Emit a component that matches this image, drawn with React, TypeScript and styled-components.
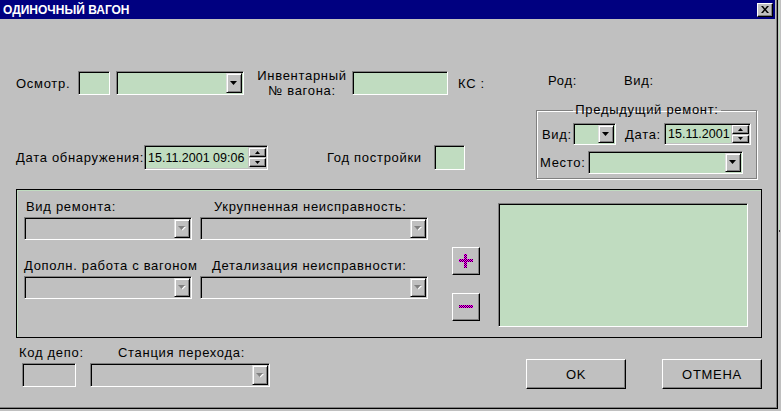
import React from 'react';
import styled, { createGlobalStyle } from 'styled-components';

const GlobalStyle = createGlobalStyle`
  html, body {
    margin: 0;
    padding: 0;
    background: #c0c0c0;
  }
  body {
    font-family: "Liberation Sans", Arial, sans-serif;
    font-size: 13px;
    letter-spacing: 0.7px;
    color: #000;
  }
`;

const Screen = styled.div`
  display: flex;
  width: 781px;
  height: 411px;
  overflow: hidden;
  background: #c0c0c0;
`;

const Window = styled.div`
  box-sizing: border-box;
  width: 778px;
  height: 409px;
  flex: none;
  display: flex;
  flex-direction: column;
  background: #c0c0c0;
  border-right: 1px solid #000;
  border-bottom: 1px solid #000;
  box-shadow: inset -1px -1px 0 #808080;
`;

const BackStrip = styled.div`
  flex: 1;
  display: flex;
  justify-content: flex-end;
`;

const BackLine = styled.div`
  width: 1px;
  height: 230px;
  margin-right: 1px;
  background: #c0dcc0;
  border-bottom: 2px solid #404040;
`;

const TitleBar = styled.div`
  height: 19px;
  margin-right: 2px;
  display: flex;
  align-items: center;
  justify-content: space-between;
  padding-left: 3px;
  background: #000080;
  color: #fff;
  font-weight: bold;
  font-size: 12px;
  letter-spacing: 0;
`;

const CloseButton = styled.div`
  box-sizing: border-box;
  width: 16px;
  height: 14px;
  margin-right: 2px;
  display: flex;
  align-items: center;
  justify-content: center;
  background: #c0c0c0;
  border: 1px solid;
  border-color: #fff #000 #000 #fff;
  box-shadow: inset -1px -1px 0 #808080;
`;

const Top = styled.div`
  display: flex;
  height: 170px;
`;

const LeftCol = styled.div`
  width: 520px;
  padding-left: 16px;
  display: flex;
  flex-direction: column;
`;

const RightCol = styled.div`
  width: 221px;
  display: flex;
  flex-direction: column;
`;

const Row = styled.div<{ $mt: number; $h: number }>`
  display: flex;
  align-items: center;
  margin-top: ${p => p.$mt}px;
  height: ${p => p.$h}px;
`;

const Label = styled.div<{ $w?: number; $ml?: number; $center?: boolean }>`
  flex: none;
  ${p => (p.$w ? `width: ${p.$w}px;` : '')}
  margin-left: ${p => p.$ml ?? 0}px;
  text-align: ${p => (p.$center ? 'center' : 'left')};
  line-height: 15px;
  white-space: nowrap;
`;

const Sunken = styled.div<{ $w: number; $h?: number; $green?: boolean; $ml?: number }>`
  box-sizing: border-box;
  flex: none;
  width: ${p => p.$w}px;
  height: ${p => p.$h ?? 24}px;
  margin-left: ${p => p.$ml ?? 0}px;
  display: flex;
  align-items: stretch;
  justify-content: flex-end;
  padding: 1px;
  border: 1px solid;
  border-color: #808080 #fff #fff #808080;
  box-shadow: inset 1px 1px 0 #000;
  background: ${p => (p.$green ? '#c0dcc0' : '#c0c0c0')};
`;

const ArrowButton = styled.div`
  box-sizing: border-box;
  width: 16px;
  display: flex;
  align-items: center;
  justify-content: center;
  background: #c0c0c0;
  border: 1px solid;
  border-color: #dfdfdf #000 #000 #dfdfdf;
  box-shadow: inset 1px 1px 0 #fff, inset -1px -1px 0 #808080;
`;

const DateText = styled.div`
  flex: 1;
  padding-left: 2px;
  display: flex;
  align-items: center;
  background: #c0dcc0;
  white-space: nowrap;
  letter-spacing: 0;
  font-size: 12.5px;
`;

const SpinBox = styled.div`
  width: 17px;
  margin-left: 1px;
  display: flex;
  flex-direction: column;
  justify-content: center;
  gap: 1px;
  background: #c0c0c0;
`;

const SpinButton = styled.div`
  box-sizing: border-box;
  height: 9px;
  display: flex;
  align-items: center;
  justify-content: center;
  border: 1px solid;
  border-color: #fff #000 #000 #fff;
  box-shadow: inset -1px -1px 0 #808080;
  background: #c0c0c0;
`;

const TypeRow = styled.div`
  display: flex;
  margin-top: 53px;
  height: 16px;
  align-items: center;
  padding-left: 12px;
`;

const GroupBox = styled.fieldset`
  box-sizing: border-box;
  margin: 15px 0 0 0;
  padding: 3px 4px 0 5px;
  width: 221px;
  height: 76px;
  border: 1px solid #808080;
  box-shadow: 1px 1px 0 #fff, inset 1px 1px 0 #fff;
  display: flex;
  flex-direction: column;
`;

const Legend = styled.legend`
  margin: 0 auto;
  padding: 0 2px;
  line-height: 14px;
`;

const BoxRow = styled.div<{ $mt: number; $h: number; $pl?: number }>`
  display: flex;
  align-items: center;
  margin-top: ${p => p.$mt}px;
  height: ${p => p.$h}px;
  margin-left: ${p => p.$pl ?? 0}px;
`;

const Panel = styled.div`
  box-sizing: border-box;
  margin-left: 16px;
  width: 746px;
  height: 149px;
  border: 1px solid #000;
  box-shadow: inset 1px 1px 0 #c0dcc0;
  display: flex;
  padding: 10px 0 0 7px;
`;

const PanelGrid = styled.div`
  display: grid;
  grid-template-columns: 168px 228px;
  grid-template-rows: 14px 23px 30px 23px;
  column-gap: 8px;
  row-gap: 3px;
  align-content: start;
`;

const GridLabel = styled.div<{ $pl?: number }>`
  align-self: end;
  padding-left: ${p => p.$pl ?? 0}px;
  line-height: 14px;
  white-space: nowrap;
`;

const PlusMinus = styled.div`
  margin: 47px 0 0 24px;
  display: flex;
  flex-direction: column;
  gap: 18px;
`;

const SquareButton = styled.div`
  box-sizing: border-box;
  width: 28px;
  height: 28px;
  display: flex;
  align-items: center;
  justify-content: center;
  border: 1px solid;
  border-color: #fff #000 #000 #fff;
  box-shadow: inset -1px -1px 0 #808080;
  background: #c0c0c0;
`;

const ListBox = styled.div`
  box-sizing: border-box;
  margin: 3px 0 0 18px;
  width: 250px;
  height: 124px;
  border: 1px solid;
  border-color: #808080 #fff #fff #808080;
  box-shadow: inset 1px 1px 0 #000;
  background: #c0dcc0;
`;

const Bottom = styled.div`
  display: flex;
  align-items: flex-start;
  padding-left: 19px;
  margin-top: 7px;
`;

const Stack = styled.div<{ $w: number; $ml?: number; $pl?: number }>`
  width: ${p => p.$w}px;
  margin-left: ${p => p.$ml ?? 0}px;
  display: flex;
  flex-direction: column;
  & > :first-child {
    padding-left: ${p => p.$pl ?? 0}px;
    height: 18px;
  }
`;

const DlgButton = styled.div<{ $ml: number }>`
  box-sizing: border-box;
  width: 100px;
  height: 30px;
  margin: 14px 0 0 ${p => p.$ml}px;
  display: flex;
  align-items: center;
  justify-content: center;
  border: 1px solid;
  border-color: #fff #000 #000 #fff;
  box-shadow: inset -1px -1px 0 #808080;
  background: #c0c0c0;
`;

const Arrow = ({ disabled }: { disabled?: boolean }) => (
  <svg width="8" height="5" viewBox="0 0 8 5">
    {disabled && <path d="M1 1h7L4.5 4.5z" fill="#fff" />}
    <path d="M0 0h7L3.5 4z" fill={disabled ? '#808080' : '#000'} />
  </svg>
);

const Combo = ({ w, h, green, disabled, ml }: { w: number; h?: number; green?: boolean; disabled?: boolean; ml?: number }) => (
  <Sunken $w={w} $h={h} $green={green} $ml={ml}>
    <ArrowButton>
      <Arrow disabled={disabled} />
    </ArrowButton>
  </Sunken>
);

const DateField = ({ w, h, value, ml }: { w: number; h?: number; value: string; ml?: number }) => (
  <Sunken $w={w} $h={h} $ml={ml}>
    <DateText>{value}</DateText>
    <SpinBox>
      <SpinButton>
        <svg width="5" height="3" viewBox="0 0 5 3"><path d="M2.5 0L5 3H0z" fill="#000" /></svg>
      </SpinButton>
      <SpinButton>
        <svg width="5" height="3" viewBox="0 0 5 3"><path d="M0 0h5L2.5 3z" fill="#000" /></svg>
      </SpinButton>
    </SpinBox>
  </Sunken>
);

const Dither = ({ id }: { id: string }) => (
  <defs>
    <pattern id={id} width="2" height="2" patternUnits="userSpaceOnUse">
      <rect width="2" height="2" fill="#ff00ff" />
      <rect width="1" height="1" fill="#400040" />
      <rect x="1" y="1" width="1" height="1" fill="#400040" />
    </pattern>
  </defs>
);

export default function App() {
  return (
    <Screen>
      <GlobalStyle />
      <Window>
        <TitleBar>
          <span>ОДИНОЧНЫЙ ВАГОН</span>
          <CloseButton>
            <svg width="8" height="7" viewBox="0 0 8 7">
              <path d="M0 0h2l2 2.5L6 0h2L5 3.5 8 7H6L4 4.5 2 7H0l3-3.5z" fill="#000" />
            </svg>
          </CloseButton>
        </TitleBar>

        <Top>
          <LeftCol>
            <Row $mt={52} $h={24}>
              <Label $w={62}>Осмотр.</Label>
              <Sunken $w={32} $green />
              <Combo w={128} green ml={6} />
              <Label $w={96} $ml={10} $center>Инвентарный<br />№ вагона:</Label>
              <Sunken $w={96} $green $ml={2} />
              <Label $ml={10}>КС :</Label>
            </Row>
            <Row $mt={50} $h={25}>
              <Label $w={128}>Дата обнаружения:</Label>
              <DateField w={124} h={25} value="15.11.2001 09:06" />
              <Label $w={107} $ml={59}>Год постройки</Label>
              <Sunken $w={31} $h={25} $green />
            </Row>
          </LeftCol>
          <RightCol>
            <TypeRow>
              <Label $w={76}>Род:</Label>
              <Label>Вид:</Label>
            </TypeRow>
            <GroupBox>
              <Legend>Предыдущий ремонт:</Legend>
              <BoxRow $mt={3} $h={22}>
                <Label $w={31}>Вид:</Label>
                <Combo w={43} h={22} green />
                <Label $w={39} $ml={9}>Дата:</Label>
                <DateField w={87} h={22} value="15.11.2001" />
              </BoxRow>
              <BoxRow $mt={6} $h={23} $pl={-2}>
                <Label $w={48}>Место:</Label>
                <Combo w={155} h={23} green />
              </BoxRow>
            </GroupBox>
          </RightCol>
        </Top>

        <Panel>
          <PanelGrid>
            <GridLabel $pl={2}>Вид ремонта:</GridLabel>
            <GridLabel $pl={14}>Укрупненная неисправность:</GridLabel>
            <Combo w={168} h={23} disabled />
            <Combo w={228} h={23} disabled />
            <GridLabel>Дополн. работа с вагоном</GridLabel>
            <GridLabel $pl={12}>Детализация неисправности:</GridLabel>
            <Combo w={168} h={23} disabled />
            <Combo w={228} h={23} disabled />
          </PanelGrid>
          <PlusMinus>
            <SquareButton>
              <svg width="14" height="14" viewBox="0 0 14 14">
                <Dither id="dp" />
                <path d="M5 0h3v5h6v3H8v6H5V8H0V5h5z" fill="url(#dp)" />
              </svg>
            </SquareButton>
            <SquareButton>
              <svg width="14" height="4" viewBox="0 0 14 4">
                <Dither id="dm" />
                <rect width="14" height="3" fill="url(#dm)" />
              </svg>
            </SquareButton>
          </PlusMinus>
          <ListBox />
        </Panel>

        <Bottom>
          <Stack $w={57}>
            <Label>Код депо:</Label>
            <Sunken $w={54} $ml={3} />
          </Stack>
          <Stack $w={180} $ml={14} $pl={28}>
            <Label>Станция перехода:</Label>
            <Combo w={180} disabled />
          </Stack>
          <DlgButton $ml={256}>OK</DlgButton>
          <DlgButton $ml={36}>ОТМЕНА</DlgButton>
        </Bottom>
      </Window>
      <BackStrip>
        <BackLine />
      </BackStrip>
    </Screen>
  );
}
